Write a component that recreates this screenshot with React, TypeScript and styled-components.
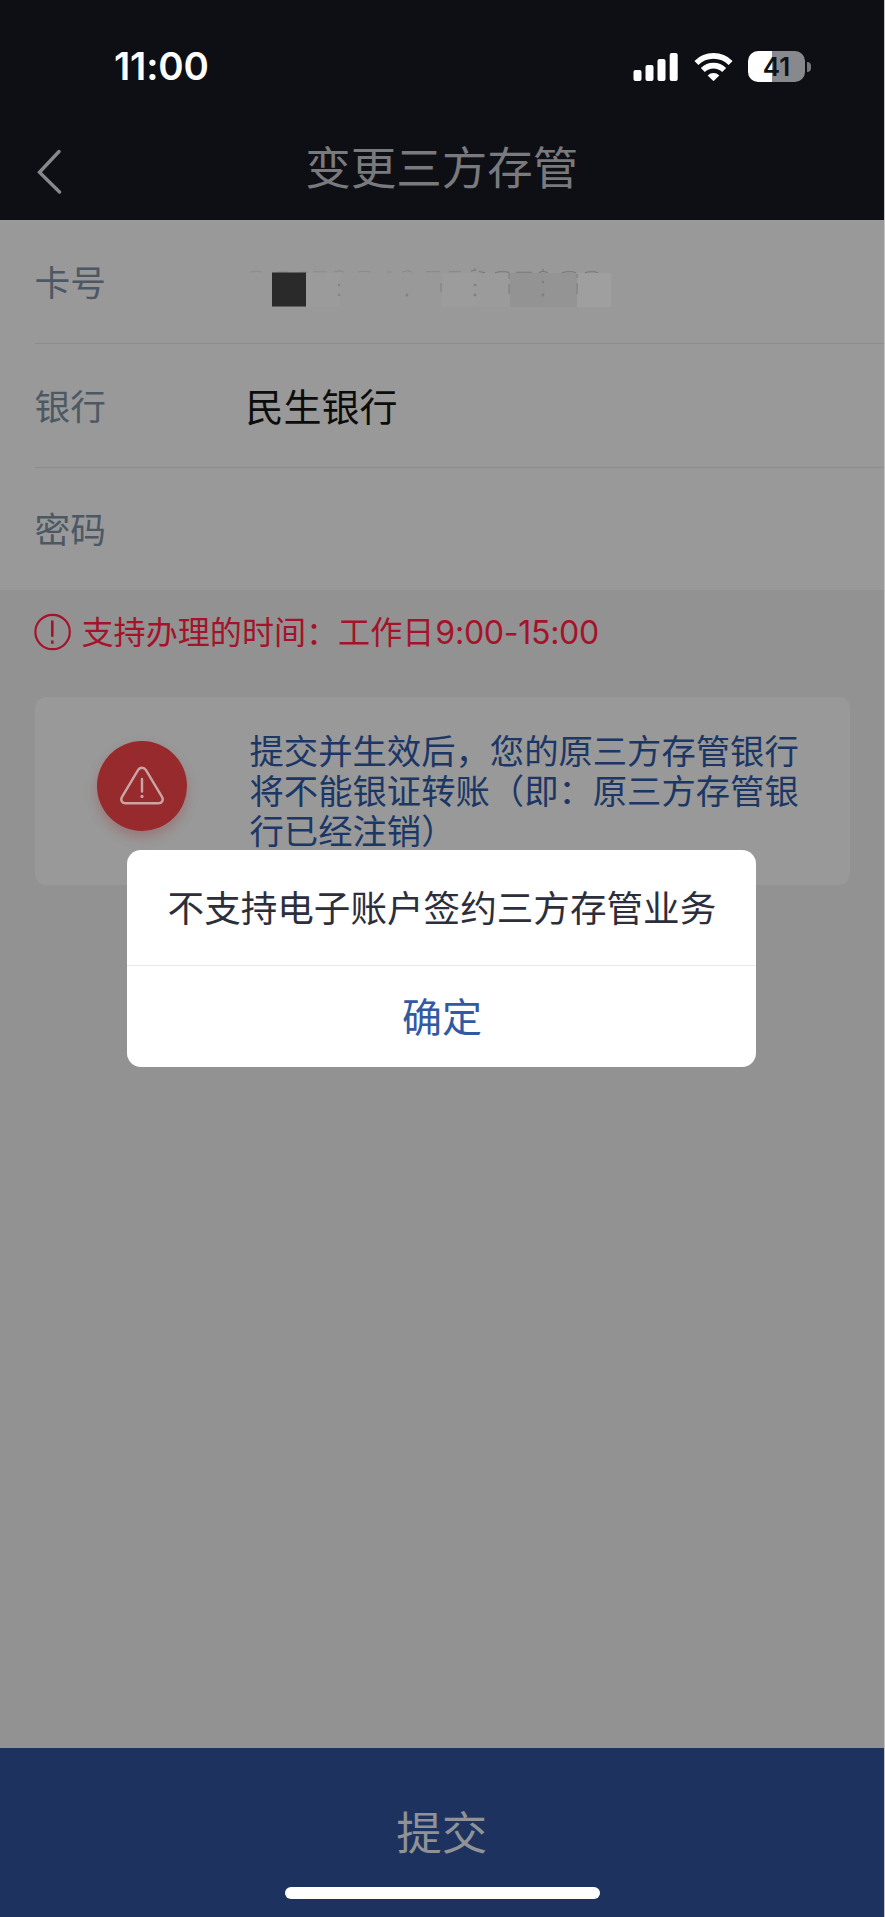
import React from "react";
import styled, { createGlobalStyle } from "styled-components";

const sans = `Inter, "Noto Sans CJK SC", sans-serif`;

const GlobalStyle = createGlobalStyle`
  * { box-sizing: border-box; }
  html, body { margin: 0; padding: 0; background: #c4c4c4; }
  body { font-family: ${sans}; overflow: hidden; }
`;

const Screen = styled.main`
  position: relative;
  display: flex;
  flex-direction: column;
  width: 883.5px;
  height: 1917px;
  background: #929292;
`;

const Top = styled.header`
  height: 220.4px;
  background: #0e0f14;
`;

const StatusBar = styled.div`
  display: flex;
  justify-content: space-between;
  align-items: center;
  height: 133px;
  padding: 0 73px 0 114px;
`;

const Time = styled.time`
  padding-bottom: 1px;
  color: #fff;
  font: 600 38.5px/46px ${sans};
  letter-spacing: -0.2px;
`;

const StatusIcons = styled.div`
  display: flex;
  align-items: center;
`;

const NavBar = styled.div`
  display: grid;
  grid-template-columns: 100px 1fr 100px;
  align-items: start;
  height: 70px;
`;

const BackButton = styled.button`
  display: flex;
  padding: 15.5px 0 0 35.5px;
  border: 0;
  background: none;
`;

const Title = styled.h1`
  margin: 0;
  padding-top: 1px;
  color: #797a7d;
  text-align: center;
  font: 400 45.5px/70px ${sans};
`;

const Form = styled.section`
  height: 369.6px;
  padding-left: 34.5px;
  background: #999;
`;

const Row = styled.div<{ $last?: boolean }>`
  display: grid;
  grid-template-columns: 211px 1fr;
  align-items: center;
  height: ${(p) => (p.$last ? "122.4px" : "123.6px")};
  border-bottom: ${(p) => (p.$last ? "0" : "1px solid #8b8c91")};
`;

const Label = styled.span`
  padding-top: 3px;
  color: #4d5865;
  font: 400 35.7px/50px ${sans};
`;

const Value = styled.span`
  padding-top: 3px;
  color: #0c0c0c;
  font: 400 38px/50px ${sans};
`;

const Notice = styled.p`
  display: flex;
  align-items: center;
  gap: 10px;
  height: 84px;
  margin: 0;
  padding-left: 33.5px;
  color: #a5132a;
  font: 400 32.1px/44px ${sans};
`;

const NoticeText = styled.span`
  padding-top: 3px;
`;

const Hours = styled.span`
  margin-left: 1px;
  letter-spacing: -0.3px;
`;

const TipCard = styled.section`
  display: grid;
  grid-template-columns: 215px 1fr;
  align-items: center;
  width: 815.5px;
  height: 187.5px;
  margin: 23.5px 0 0 34.5px;
  border-radius: 11px;
  background: #999;
`;

const WarningBadge = styled.div`
  display: flex;
  align-items: center;
  justify-content: center;
  width: 90px;
  height: 90px;
  margin: -11px 0 0 62px;
  border-radius: 50%;
  background: #972a2d;
  box-shadow: 0 6px 12px rgba(151, 42, 45, 0.3);
`;

const TipText = styled.p`
  margin: 0;
  padding-top: 2px;
  color: #1c3765;
  font: 400 34.35px/40.2px ${sans};
  white-space: pre;
`;

const Footer = styled.footer`
  display: flex;
  flex-direction: column;
  align-items: center;
  height: 169.5px;
  margin-top: auto;
  background: #1d325e;
`;

const Submit = styled.button`
  height: 139.5px;
  padding: 33px 0 0;
  border: 0;
  background: none;
  color: #8f9296;
  font: 400 45.5px/66px ${sans};
`;

const HomeIndicator = styled.div`
  width: 315px;
  height: 12px;
  margin-left: 2px;
  border-radius: 6px;
  background: #fff;
`;

const Dialog = styled.div`
  position: absolute;
  top: 849.5px;
  left: 127.4px;
  width: 629px;
  height: 217.5px;
  border-radius: 14px;
  background: #fff;
  text-align: center;
`;

const Message = styled.p`
  height: 116px;
  margin: 0;
  padding-top: 2px;
  border-bottom: 1px solid #e9e9eb;
  color: #2c2f3b;
  font: 400 36.6px/115px ${sans};
  white-space: nowrap;
`;

const Confirm = styled.button`
  width: 100%;
  height: 101px;
  padding: 2px 0 0;
  border: 0;
  background: none;
  color: #3259a3;
  font: 400 40px/99px ${sans};
`;

const Battery = styled.div`
  display: flex;
  align-items: center;
  justify-content: center;
  width: 57px;
  height: 31px;
  margin-left: 15px;
  border-radius: 10px;
  background: linear-gradient(90deg, #fff 24px, #88898c 24px);
  color: #111217;
  font: 600 26px/31px ${sans};
`;

const BatteryTip = styled.div`
  width: 4px;
  height: 10px;
  margin-left: 1.5px;
  border-radius: 0 5px 5px 0;
  background: #77787b;
`;

const SignalIcon = () => (
  <svg width="46" height="30" viewBox="0 0 46 30" fill="#fff">
    <rect x="0.5" y="18" width="8" height="11" rx="2" />
    <rect x="12.5" y="13" width="8" height="16" rx="2" />
    <rect x="24.5" y="7" width="8" height="22" rx="2" />
    <rect x="36.7" y="1" width="8" height="28" rx="2" />
  </svg>
);

const WifiIcon = () => (
  <svg width="39" height="30" viewBox="0 0 39 30" style={{ marginLeft: 15 }}>
    <g fill="none" stroke="#fff" strokeWidth="5.6">
      <path d="M2.4 10.9a24.4 24.4 0 0 1 34.2 0" />
      <path d="M8.8 18a15.2 15.2 0 0 1 21.4 0" />
    </g>
    <path d="M13.7 23.4a8.2 8.2 0 0 1 11.6 0L20.2 28.6a1 1 0 0 1-1.4 0z" fill="#fff" />
  </svg>
);

const BackIcon = () => (
  <svg width="27" height="45" viewBox="0 0 27 45" fill="none" stroke="#87888b" strokeWidth="3.4" strokeLinecap="round">
    <path d="M23 2.5 3.5 23.3 23.5 43" />
  </svg>
);

const NoticeIcon = () => (
  <svg width="38" height="38" viewBox="0 0 38 38" fill="none" stroke="#a5132a" strokeWidth="2.2">
    <circle cx="18.6" cy="19" r="17.2" />
    <path d="M18.3 7.5v16.3M18.3 27.5v3.3" strokeWidth="2.6" />
  </svg>
);

const TriangleIcon = () => (
  <svg width="46" height="40" viewBox="0 0 46 40" fill="none" stroke="#c9a5a5" strokeWidth="2.4">
    <path d="M19 4.2 3.2 30.7c-2.2 3.5-.1 6.6 3.5 6.6h32.6c3.6 0 5.7-3.1 3.5-6.6L27 4.2c-1.9-3.2-6.1-3.2-8 0z" />
    <path d="M23 13v12.5" strokeLinecap="round" />
    <circle cx="23" cy="30.4" r="1.6" fill="#c9a5a5" stroke="none" />
  </svg>
);

const cells = [
  [60, "#9b9b9b"], [196, "#9c9c9c"], [230, "#9b9b9b"],
  [264, "#939393"], [298, "#949494"], [331, "#9f9f9f"],
] as const;

const MaskedNumber = () => (
  <svg width="370" height="42" viewBox="0 0 370 42" style={{ display: "block", marginTop: 10 }}>
    {cells.map(([x, fill]) => <rect key={x} x={x} y="7" width="34" height="34" fill={fill} />)}
    <g fill="none" stroke="#8a8a8a" strokeWidth="1.1">
      <path d="M4 6q6-1.4 12 0M32 6h10M54 6h8M67 5.8h13M88 6l5-1.3 5 1.3M112 6q6-1.4 12 0M141 6h5M156 6l5-1.3 5 1.3M180 5.6h14M203 5.6h12" />
    </g>
    <g fill="none" stroke="#787878" strokeWidth="1.1">
      <path d="M225 5l4-1M233 5.5l6 1.2M249 6.8l4-1h8l2 1M270 6.2h16M293 6.5l4-1.3 5 1.3M316 6.8l4-1h7l3 1M339 6.8l4-1h6l3 1" />
    </g>
    <g fill="#808080">
      <circle cx="93" cy="19" r="1.2" /><circle cx="93" cy="29" r="1.2" />
      <circle cx="161" cy="29" r="1.4" /><circle cx="229" cy="19" r="1.3" /><circle cx="229" cy="29" r="1.4" />
      <circle cx="297" cy="16" r="1.3" /><circle cx="297" cy="29" r="1.4" />
      <circle cx="297" cy="3.8" r="1" /><circle cx="229" cy="3.8" r="1.2" />
      <rect x="194.5" y="17" width="1" height="9" />
      <path d="M262.5 7h1.2v6h-1.2zM262.5 18h1.2v10h-1.2zM330.5 8h1.2v4h-1.2zM330.5 17h1.2v11h-1.2z" />
    </g>
    <rect x="26" y="6.5" width="34" height="34" fill="#2a2a2a" />
  </svg>
);

export default function App() {
  return (
    <>
      <GlobalStyle />
      <Screen>
        <Top>
          <StatusBar>
            <Time>11:00</Time>
            <StatusIcons>
              <SignalIcon />
              <WifiIcon />
              <Battery>41</Battery>
              <BatteryTip />
            </StatusIcons>
          </StatusBar>
          <NavBar>
            <BackButton aria-label="返回"><BackIcon /></BackButton>
            <Title>变更三方存管</Title>
          </NavBar>
        </Top>
        <Form>
          <Row><Label>卡号</Label><MaskedNumber /></Row>
          <Row><Label>银行</Label><Value>民生银行</Value></Row>
          <Row $last><Label>密码</Label></Row>
        </Form>
        <Notice>
          <NoticeIcon />
          <NoticeText>支持办理的时间：工作日<Hours>9:00-15:00</Hours></NoticeText>
        </Notice>
        <TipCard>
          <WarningBadge><TriangleIcon /></WarningBadge>
          <TipText>{"提交并生效后，您的原三方存管银行\n将不能银证转账（即：原三方存管银\n行已经注销）"}</TipText>
        </TipCard>
        <Footer>
          <Submit>提交</Submit>
          <HomeIndicator />
        </Footer>
        <Dialog role="dialog">
          <Message>不支持电子账户签约三方存管业务</Message>
          <Confirm>确定</Confirm>
        </Dialog>
      </Screen>
    </>
  );
}
